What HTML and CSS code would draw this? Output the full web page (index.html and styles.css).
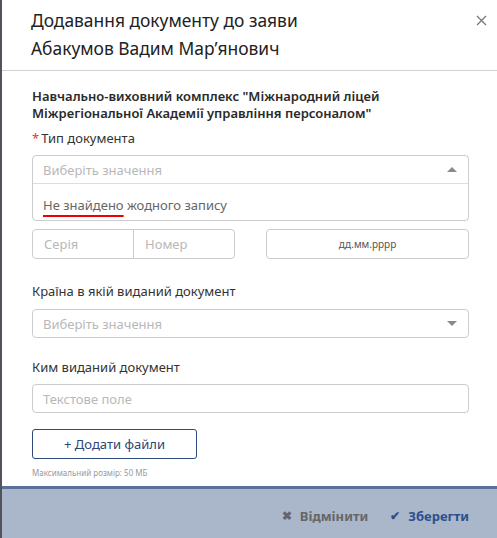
FILE: index.html
```html
<!DOCTYPE html>
<html lang="uk">
<head>
<meta charset="utf-8">
<link rel="stylesheet" href="styles.css">
</head>
<body>
<div class="modal">
  <div class="header">
    <h1 class="title">Додавання документу до заяви<br>Абакумов Вадим Мар’янович</h1>
    <span class="close">
      <svg width="11" height="11" viewBox="0 0 11 11"><path d="M1 1L10 10M10 1L1 10" stroke="#777" stroke-width="1.3" fill="none"/></svg>
    </span>
  </div>
  <div class="content">
    <div class="org">Навчально-виховний комплекс "Міжнародний ліцей Міжрегіональної Академії управління персоналом"</div>
    <div class="label"><span class="req">*</span>Тип документа</div>
    <div class="select open">
      <div class="select-row">
        <span class="placeholder">Виберіть значення</span>
        <span class="caret up"></span>
      </div>
      <div class="dropdown"><span class="spell">Не знайдено</span> жодного запису</div>
    </div>
    <div class="row">
      <div class="pair">
        <div class="cell"><span class="placeholder">Серія</span></div>
        <div class="cell second"><span class="placeholder">Номер</span></div>
      </div>
      <div class="date">дд.мм.рррр</div>
    </div>
    <div class="label gap">Країна в якій виданий документ</div>
    <div class="select country">
      <div class="select-row">
        <span class="placeholder">Виберіть значення</span>
        <span class="caret down"></span>
      </div>
    </div>
    <div class="label gap2">Ким виданий документ</div>
    <div class="input"><span class="placeholder">Текстове поле</span></div>
    <button class="add">+ Додати файли</button>
    <div class="hint">Максимальний розмір: 50 МБ</div>
  </div>
  <div class="footer">
    <span class="btn cancel"><span class="ico">✖</span>Відмінити</span>
    <span class="btn save"><span class="ico">✔</span>Зберегти</span>
  </div>
</div>
</body>
</html>
```
FILE: styles.css
```css
html, body {
  margin: 0;
  padding: 0;
  background: #fff;
}
body {
  font-family: "Noto Sans", "Open Sans", sans-serif;
  color: #333;
  border-left: 2px solid #50555c;
  height: 538px;
  box-sizing: border-box;
  overflow: hidden;
}
.modal {
  display: flex;
  flex-direction: column;
  height: 538px;
}
.header {
  position: relative;
  border-bottom: 1px solid #d2d2d2;
  padding: 6px 20px 0 29px;
  height: 64px;
  flex: none;
}
.title {
  margin: 0;
  font-size: 17.4px;
  font-weight: 400;
  line-height: 28px;
  color: #222;
}
.close {
  position: absolute;
  right: 10px;
  top: 9px;
}
.content {
  flex: 1;
  padding: 17px 28px 0 30px;
}
.org {
  font-size: 13px;
  font-weight: 600;
  line-height: 17px;
  color: #2a2a2a;
  margin-right: 40px;
}
.label {
  font-size: 13px;
  line-height: 18px;
  margin-top: 7px;
  color: #333;
}
.label.gap {
  margin-top: 23px;
}
.label.gap2 {
  margin-top: 20px;
}
.req {
  color: #e33;
  margin-right: 2px;
}
.select, .input {
  border: 1px solid #ccc;
  border-radius: 4px;
  margin-top: 8px;
}
.select.country {
  margin-top: 9px;
}
.select-row {
  display: flex;
  align-items: center;
  justify-content: space-between;
  height: 27px;
  padding: 0 10px 0 10px;
}
.input {
  height: 27px;
  display: flex;
  align-items: center;
  padding-left: 10px;
}
.placeholder {
  font-size: 13px;
  color: #b8b8b8;
}
.caret {
  width: 0;
  height: 0;
  border-left: 5px solid transparent;
  border-right: 5px solid transparent;
  margin-right: 1px;
}
.caret.up { border-bottom: 5px solid #8a8a8a; }
.caret.down { border-top: 5px solid #8a8a8a; }
.dropdown {
  border-top: 1px solid #ddd;
  height: 37px;
  box-sizing: border-box;
  padding: 12px 10px 0 10px;
  font-size: 13px;
  color: #666;
}
.spell {
  text-decoration: underline;
  text-decoration-color: #e00;
  text-decoration-thickness: 2px;
  text-underline-offset: 5px;
}
.row {
  display: flex;
  justify-content: space-between;
  margin-top: 8px;
}
.pair {
  display: flex;
  width: 203px;
  height: 30px;
  border: 1px solid #ccc;
  border-radius: 4px;
  box-sizing: border-box;
}
.cell {
  flex: 0 0 100px;
  display: flex;
  align-items: center;
  padding-left: 11px;
  box-sizing: border-box;
}
.cell.second {
  flex: 1;
  border-left: 1px solid #ccc;
}
.date {
  width: 203px;
  height: 30px;
  border: 1px solid #ccc;
  border-radius: 4px;
  box-sizing: border-box;
  display: flex;
  align-items: center;
  justify-content: center;
  font-size: 10px;
  color: #555;
}
.add {
  display: block;
  margin-top: 16px;
  width: 165px;
  height: 30px;
  background: #fff;
  border: 1px solid #2e4b7c;
  border-radius: 3px;
  font-family: "Noto Sans", "Open Sans", sans-serif;
  font-size: 13px;
  color: #2b4677;
  padding: 0;
}
.hint {
  font-size: 8px;
  color: #999;
  margin-top: 8px;
}
.footer {
  flex: none;
  height: 45px;
  padding-top: 4px;
  border-top: 3px solid #5a7299;
  background: #aab6c9;
  display: flex;
  justify-content: flex-end;
  align-items: center;
  gap: 22px;
  padding-right: 28px;
}
.btn {
  font-size: 13px;
  font-weight: 700;
  display: flex;
  align-items: center;
}
.ico {
  font-size: 12px;
  margin-right: 8px;
}
.cancel { color: #666; }
.save { color: #2c4f8d; }
```
